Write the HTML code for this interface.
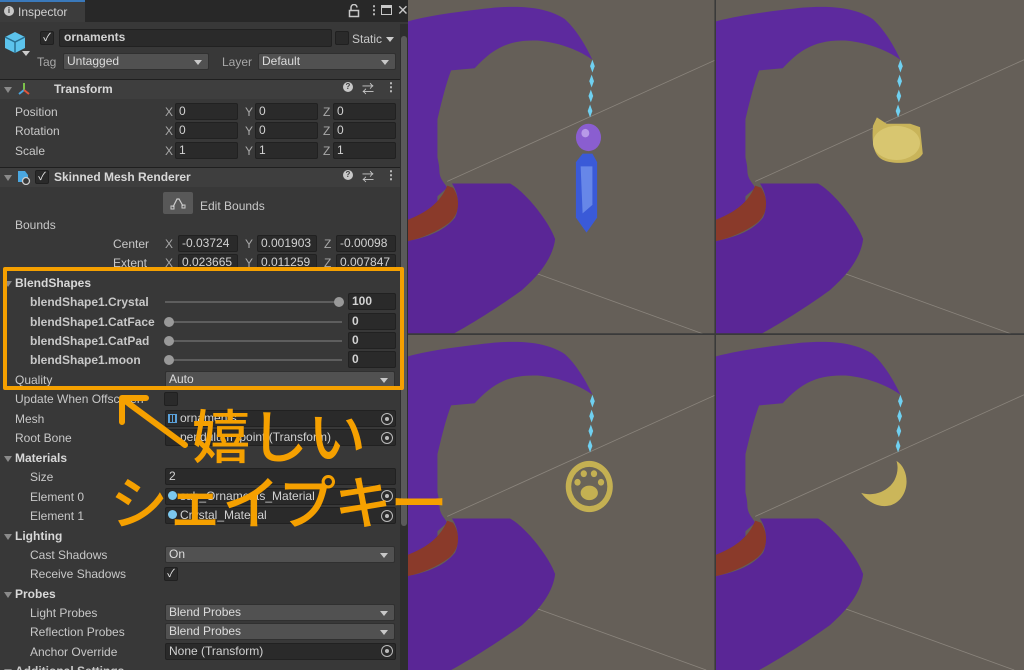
<!DOCTYPE html>
<html><head><meta charset="utf-8">
<style>
*{margin:0;padding:0;box-sizing:border-box}
body{width:1024px;height:670px;overflow:hidden;background:#5f5a55;font-family:"Liberation Sans","Noto Sans CJK JP",sans-serif;font-size:12px;color:#c8c8c8;position:relative}
#insp{position:absolute;left:0;top:0;width:408px;height:670px;background:#383838;overflow:hidden}
.a{position:absolute;white-space:nowrap}
.lbl{position:absolute;white-space:nowrap;line-height:14px}
.f{position:absolute;background:#2a2a2a;border:1px solid #212121;border-radius:2px;height:17px;line-height:15px;padding-left:3px;color:#d2d2d2;white-space:nowrap;overflow:hidden}
.dd{position:absolute;background:#515151;border:1px solid #303030;border-radius:2px;height:17px;line-height:15px;padding-left:3px;color:#dcdcdc;white-space:nowrap}
.dd:after{content:"";position:absolute;right:6px;top:6px;border-left:4px solid transparent;border-right:4px solid transparent;border-top:5px solid #c8c8c8}
.hdr{position:absolute;left:0;width:400px;height:20px;background:#3e3e3e;border-top:1px solid #1f1f1f}
.b{font-weight:bold}
.tri{position:absolute;border-left:4px solid transparent;border-right:4px solid transparent;border-top:6px solid #8a8a8a}
.cb{position:absolute;width:14px;height:14px;background:#2a2a2a;border:1px solid #202020;border-radius:2px;color:#e8e8e8;font-size:11px;line-height:12px;text-align:center}
.tg{position:absolute;width:12px;height:12px;border:1.5px solid #bbb;border-radius:50%}
.tg:after{content:"";position:absolute;left:2.5px;top:2.5px;width:4px;height:4px;border-radius:50%;background:#bbb}
.sl{position:absolute;height:2px;background:#5e5e5e}
.kn{position:absolute;width:10px;height:10px;border-radius:50%;background:#999}
.ax{position:absolute;color:#a8a8a8}
</style></head><body>
<div id="insp">
 <div class="a" style="left:0;top:0;width:408px;height:22px;background:#282828"></div>
 <div class="a" style="left:0;top:0;width:85px;height:22px;background:#3c3c3c;border-top:2px solid #3a79bb"></div>
 <div class="a" style="left:4px;top:6px;width:10px;height:10px;border-radius:50%;background:#c8c8c8;color:#3c3c3c;font-size:8px;font-weight:bold;text-align:center;line-height:10px">i</div>
 <div class="a" style="left:18px;top:5px;color:#d0d0d0">Inspector</div>
 <svg class="a" style="left:348px;top:4px" width="12" height="14"><path d="M3 6 V3.5 A3 3 0 0 1 9 3.5" stroke="#c8c8c8" stroke-width="1.5" fill="none"/><rect x="1.5" y="6.5" width="9" height="6" fill="none" stroke="#c8c8c8" stroke-width="1.5"/></svg>
 <div class="a" style="left:368px;top:3px;font-weight:bold">⋮</div>
 <div class="a" style="left:381px;top:5px;width:11px;height:10px;border:1.5px solid #c8c8c8;border-top-width:3px"></div>
 <div class="a" style="left:397px;top:2px;font-size:14px">✕</div>
 <div class="a" style="left:400px;top:24px;width:8px;height:646px;background:#2e2e2e"></div>
 <div class="a" style="left:401px;top:36px;width:6px;height:490px;background:#5a5a5a;border-radius:3px"></div>
 <svg class="a" style="left:3px;top:30px" width="26" height="26" viewBox="0 0 26 26"><path d="M12 2 L22 7 L22 18 L12 23 L2 18 L2 7Z" fill="#5cc3ec"/><path d="M2 7 L12 12 L22 7 M12 12 L12 23" stroke="#2a6f90" stroke-width="1.5" fill="none"/></svg>
 <div class="a" style="left:22px;top:51px;border-left:4px solid transparent;border-right:4px solid transparent;border-top:5px solid #ccc"></div>
 <div class="cb" style="left:40px;top:31px">✓</div>
 <div class="f" style="left:59px;top:29px;width:273px;height:18px;font-weight:bold;padding-left:4px">ornaments</div>
 <div class="cb" style="left:335px;top:31px"></div>
 <div class="a" style="left:352px;top:32px">Static</div>
 <div class="a" style="left:386px;top:37px;border-left:4px solid transparent;border-right:4px solid transparent;border-top:5px solid #ccc"></div>
 <div class="a" style="left:37px;top:55px;color:#a8a8a8">Tag</div>
 <div class="dd" style="left:63px;top:53px;width:146px">Untagged</div>
 <div class="a" style="left:222px;top:55px;color:#a8a8a8">Layer</div>
 <div class="dd" style="left:258px;top:53px;width:138px">Default</div>

 <div class="hdr" style="top:79px"></div>
 <div class="tri" style="left:4px;top:87px"></div>
 <svg class="a" style="left:16px;top:81px" width="16" height="16" viewBox="0 0 16 16"><path d="M8 2 L8 9" stroke="#7cc24a" stroke-width="2"/><path d="M8 9 L3 13" stroke="#4aa7e0" stroke-width="2"/><path d="M8 9 L13 13" stroke="#e0553a" stroke-width="2"/></svg>
 <div class="a b" style="left:54px;top:82px;color:#d8d8d8">Transform</div>
 <div class="a" style="left:343px;top:82px;width:10px;height:10px;border-radius:50%;background:#c8c8c8;color:#3e3e3e;font-size:8px;font-weight:bold;text-align:center;line-height:10px">?</div>
 <div class="a" style="left:362px;top:80px">⇄</div>
 <div class="a b" style="left:385px;top:80px">⋮</div>

 <div class="lbl" style="left:15px;top:105px">Position</div>
 <div class="lbl" style="left:15px;top:124px">Rotation</div>
 <div class="lbl" style="left:15px;top:144px">Scale</div>
 <div class="ax" style="left:165px;top:105px">X</div><div class="f" style="left:175px;top:103px;width:63px">0</div>
 <div class="ax" style="left:245px;top:105px">Y</div><div class="f" style="left:255px;top:103px;width:63px">0</div>
 <div class="ax" style="left:323px;top:105px">Z</div><div class="f" style="left:333px;top:103px;width:63px">0</div>
 <div class="ax" style="left:165px;top:124px">X</div><div class="f" style="left:175px;top:122px;width:63px">0</div>
 <div class="ax" style="left:245px;top:124px">Y</div><div class="f" style="left:255px;top:122px;width:63px">0</div>
 <div class="ax" style="left:323px;top:124px">Z</div><div class="f" style="left:333px;top:122px;width:63px">0</div>
 <div class="ax" style="left:165px;top:144px">X</div><div class="f" style="left:175px;top:142px;width:63px">1</div>
 <div class="ax" style="left:245px;top:144px">Y</div><div class="f" style="left:255px;top:142px;width:63px">1</div>
 <div class="ax" style="left:323px;top:144px">Z</div><div class="f" style="left:333px;top:142px;width:63px">1</div>

 <div class="hdr" style="top:167px"></div>
 <div class="tri" style="left:4px;top:175px"></div>
 <svg class="a" style="left:16px;top:169px" width="16" height="16" viewBox="0 0 16 16"><path d="M2 2 L9 2 L12 6 L12 13 L2 13Z" fill="#4aa7e0"/><circle cx="10" cy="12" r="3.5" fill="#383838" stroke="#ccc" stroke-width="1.3"/></svg>
 <div class="cb" style="left:35px;top:170px">✓</div>
 <div class="a b" style="left:54px;top:170px;color:#d8d8d8">Skinned Mesh Renderer</div>
 <div class="a" style="left:343px;top:170px;width:10px;height:10px;border-radius:50%;background:#c8c8c8;color:#3e3e3e;font-size:8px;font-weight:bold;text-align:center;line-height:10px">?</div>
 <div class="a" style="left:362px;top:168px">⇄</div>
 <div class="a b" style="left:385px;top:168px">⋮</div>

 <div class="a" style="left:163px;top:192px;width:30px;height:22px;background:#585858;border-radius:2px"></div>
 <svg class="a" style="left:170px;top:196px" width="16" height="14" viewBox="0 0 16 14"><path d="M3 11 L7 3 L9 3 L13 10" stroke="#ccc" fill="none" stroke-width="1.2"/><rect x="1" y="10" width="3" height="3" fill="none" stroke="#ccc"/><rect x="12" y="9" width="3" height="3" fill="none" stroke="#ccc"/></svg>
 <div class="a" style="left:200px;top:199px">Edit Bounds</div>
 <div class="lbl" style="left:15px;top:218px">Bounds</div>
 <div class="lbl" style="left:113px;top:237px">Center</div>
 <div class="ax" style="left:165px;top:237px">X</div><div class="f" style="left:178px;top:235px;width:60px">-0.03724</div>
 <div class="ax" style="left:245px;top:237px">Y</div><div class="f" style="left:257px;top:235px;width:60px">0.001903</div>
 <div class="ax" style="left:324px;top:237px">Z</div><div class="f" style="left:336px;top:235px;width:60px">-0.00098</div>
 <div class="lbl" style="left:113px;top:256px">Extent</div>
 <div class="ax" style="left:165px;top:256px">X</div><div class="f" style="left:178px;top:254px;width:60px">0.023665</div>
 <div class="ax" style="left:245px;top:256px">Y</div><div class="f" style="left:257px;top:254px;width:60px">0.011259</div>
 <div class="ax" style="left:324px;top:256px">Z</div><div class="f" style="left:336px;top:254px;width:60px">0.007847</div>

 <div class="tri" style="left:4px;top:281px"></div>
 <div class="lbl b" style="left:15px;top:276px;color:#d8d8d8">BlendShapes</div>
 <div class="lbl b" style="left:30px;top:295px">blendShape1.Crystal</div>
 <div class="lbl b" style="left:30px;top:315px">blendShape1.CatFace</div>
 <div class="lbl b" style="left:30px;top:334px">blendShape1.CatPad</div>
 <div class="lbl b" style="left:30px;top:353px">blendShape1.moon</div>
 <div class="sl" style="left:165px;top:301px;width:177px"></div><div class="kn" style="left:334px;top:297px"></div>
 <div class="sl" style="left:165px;top:321px;width:177px"></div><div class="kn" style="left:164px;top:317px"></div>
 <div class="sl" style="left:165px;top:340px;width:177px"></div><div class="kn" style="left:164px;top:336px"></div>
 <div class="sl" style="left:165px;top:359px;width:177px"></div><div class="kn" style="left:164px;top:355px"></div>
 <div class="f b" style="left:348px;top:293px;width:48px">100</div>
 <div class="f b" style="left:348px;top:313px;width:48px">0</div>
 <div class="f b" style="left:348px;top:332px;width:48px">0</div>
 <div class="f b" style="left:348px;top:351px;width:48px">0</div>
 <div class="lbl" style="left:15px;top:373px">Quality</div>
 <div class="dd" style="left:165px;top:371px;width:230px">Auto</div>

 <div class="lbl" style="left:15px;top:392px">Update When Offscreen</div>
 <div class="cb" style="left:164px;top:392px"></div>
 <div class="lbl" style="left:15px;top:412px">Mesh</div>
 <div class="f" style="left:165px;top:410px;width:231px;padding-left:14px">ornaments</div>
 <div class="a" style="left:168px;top:414px;width:9px;height:9px;border:1px solid #5aa0d8;background:repeating-linear-gradient(90deg,#5aa0d8 0 1px,transparent 1px 3px)"></div>
 <div class="tg" style="left:381px;top:413px"></div>
 <div class="lbl" style="left:15px;top:431px">Root Bone</div>
 <div class="f" style="left:165px;top:429px;width:231px;padding-left:14px">pendulum_point (Transform)</div>
 <div class="tg" style="left:381px;top:432px"></div>
 <div class="tri" style="left:4px;top:456px"></div>
 <div class="lbl b" style="left:15px;top:451px;color:#d8d8d8">Materials</div>
 <div class="lbl" style="left:30px;top:470px">Size</div>
 <div class="f" style="left:165px;top:468px;width:231px">2</div>
 <div class="lbl" style="left:30px;top:490px">Element 0</div>
 <div class="f" style="left:165px;top:488px;width:231px;padding-left:14px">sub_Ornaments_Material</div>
 <div class="a" style="left:168px;top:491px;width:9px;height:9px;border-radius:50%;background:#7cc8ee"></div>
 <div class="tg" style="left:381px;top:490px"></div>
 <div class="lbl" style="left:30px;top:509px">Element 1</div>
 <div class="f" style="left:165px;top:507px;width:231px;padding-left:14px">Crystal_Material</div>
 <div class="a" style="left:168px;top:510px;width:9px;height:9px;border-radius:50%;background:#7cc8ee"></div>
 <div class="tg" style="left:381px;top:510px"></div>
 <div class="tri" style="left:4px;top:534px"></div>
 <div class="lbl b" style="left:15px;top:529px;color:#d8d8d8">Lighting</div>
 <div class="lbl" style="left:30px;top:548px">Cast Shadows</div>
 <div class="dd" style="left:165px;top:546px;width:230px">On</div>
 <div class="lbl" style="left:30px;top:567px">Receive Shadows</div>
 <div class="cb" style="left:164px;top:567px">✓</div>
 <div class="tri" style="left:4px;top:592px"></div>
 <div class="lbl b" style="left:15px;top:587px;color:#d8d8d8">Probes</div>
 <div class="lbl" style="left:30px;top:606px">Light Probes</div>
 <div class="dd" style="left:165px;top:604px;width:230px">Blend Probes</div>
 <div class="lbl" style="left:30px;top:625px">Reflection Probes</div>
 <div class="dd" style="left:165px;top:623px;width:230px">Blend Probes</div>
 <div class="lbl" style="left:30px;top:645px">Anchor Override</div>
 <div class="f" style="left:165px;top:643px;width:231px">None (Transform)</div>
 <div class="tg" style="left:381px;top:645px"></div>
 <div class="tri" style="left:4px;top:669px"></div>
 <div class="lbl b" style="left:15px;top:664px">Additional Settings</div>
</div>

<svg class="a" style="left:408px;top:0" width="616" height="670" viewBox="0 0 1570 1570" preserveAspectRatio="none">
 <defs>
  <g id="hat">
   <rect width="785" height="785" fill="#655f58"/>
   <path d="M100 425 L785 140" stroke="#8a847c" stroke-width="2"/>
   <path d="M100 565 L760 785" stroke="#8a847c" stroke-width="2"/>
   <rect x="0" y="60" width="75" height="470" fill="#5d2a9e"/>
   <path d="M0 50 C60 35 150 25 220 18 C300 12 360 20 400 45 C430 70 455 110 470 140 C440 120 390 100 330 95 C250 92 210 120 170 160 L110 165 C95 200 80 260 70 300 C60 340 80 370 80 400 C80 420 95 430 100 440 L0 520 Z" fill="#5d2a9e"/>
   <path d="M0 515 C40 500 80 480 100 435 L115 440 C135 470 132 500 105 522 C75 543 35 558 0 565 Z" fill="#8a3a2a"/>
   <path d="M0 565 C40 557 90 545 120 510 C132 485 130 455 112 430 L260 430 C300 450 360 520 375 560 C370 600 340 640 290 680 C230 720 160 760 110 785 L0 785 Z" fill="#5a2696"/>
   <g fill="#6fd0f0">
    <path d="M470 140 l-6 15 l6 15 l6 -15z"/><path d="M468 175 l-6 15 l6 15 l6 -15z"/><path d="M466 210 l-6 15 l6 15 l6 -15z"/><path d="M464 245 l-6 15 l6 15 l6 -15z"/>
   </g>
  </g>
 </defs>
 <use href="#hat" x="0" y="0"/>
 <use href="#hat" x="785" y="0"/>
 <use href="#hat" x="0" y="785"/>
 <use href="#hat" x="785" y="785"/>
 <path d="M783 0 V1570 M0 783 H1570" stroke="#3a3a3a" stroke-width="4"/>
 <circle cx="460" cy="322" r="32" fill="#8a5ed0"/><circle cx="452" cy="312" r="10" fill="#b89ae8"/>
 <path d="M445 360 L470 360 L482 380 L482 510 L455 545 L428 510 L428 380Z" fill="#3a5ad8"/>
 <path d="M440 390 L470 390 L470 480 L445 500Z" fill="#7a9af0" opacity=".7"/>
 <path d="M1185 295 L1195 275 L1220 290 L1280 290 L1305 298 L1312 360 C1300 380 1260 385 1230 380 C1195 375 1180 355 1185 295Z" fill="#c9b45a"/>
 <ellipse cx="1245" cy="335" rx="60" ry="40" fill="#d8c670"/>
 <circle cx="462" cy="1140" r="60" fill="#c4b052"/><circle cx="462" cy="1140" r="46" fill="#6a6458"/>
 <ellipse cx="462" cy="1155" rx="22" ry="17" fill="#c4b052"/>
 <circle cx="432" cy="1130" r="8" fill="#c4b052"/><circle cx="448" cy="1110" r="8" fill="#c4b052"/><circle cx="474" cy="1110" r="8" fill="#c4b052"/><circle cx="492" cy="1130" r="8" fill="#c4b052"/>
 <path d="M1245 1080 C1280 1100 1280 1160 1240 1180 C1210 1195 1175 1180 1155 1155 C1190 1165 1225 1150 1240 1125 C1248 1110 1250 1095 1245 1080Z" fill="#cbb65a"/>
</svg>

<div class="a" style="left:3px;top:267px;width:401px;height:123px;border:4px solid #f5a000;border-radius:2px"></div>
<svg class="a" style="left:110px;top:390px" width="90" height="70"><path d="M14 10 L75 55" stroke="#f5a000" stroke-width="6" stroke-linecap="round"/><path d="M12 8 L12 32 M12 8 L36 8" stroke="#f5a000" stroke-width="6" stroke-linecap="round"/></svg>
<div class="a" style="left:192px;top:398px;font-size:58px;line-height:70px;color:#f5a000;font-family:'Noto Sans CJK JP',sans-serif;font-weight:500">嬉しい</div>
<div class="a" style="left:110px;top:464px;font-size:58px;line-height:70px;color:#f5a000;font-family:'Noto Sans CJK JP',sans-serif;font-weight:500;letter-spacing:-2px">シェイプキー</div>
</body></html>
